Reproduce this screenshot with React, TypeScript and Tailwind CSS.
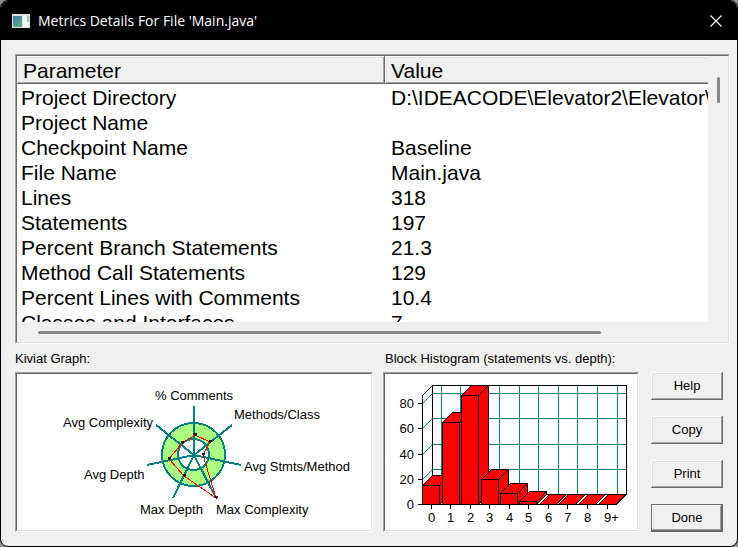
import type { ReactNode } from "react";

const rows: [string, string][] = [
  ["Project Directory", "D:\\IDEACODE\\Elevator2\\Elevator\\"],
  ["Project Name", ""],
  ["Checkpoint Name", "Baseline"],
  ["File Name", "Main.java"],
  ["Lines", "318"],
  ["Statements", "197"],
  ["Percent Branch Statements", "21.3"],
  ["Method Call Statements", "129"],
  ["Percent Lines with Comments", "10.4"],
  ["Classes and Interfaces", "7"],
];

const bevelOut =
  "shadow-[inset_-1px_-1px_#696969,inset_1px_1px_#ffffff,inset_-2px_-2px_#a0a0a0,inset_2px_2px_#e3e3e3]";
const bevelOpenRight =
  "shadow-[inset_0_-1px_#696969,inset_1px_1px_#ffffff,inset_0_-2px_#a0a0a0,inset_2px_2px_#e3e3e3]";

function Sunken({ className = "", children }: { className?: string; children: ReactNode }) {
  return (
    <div className={`border border-t-[#a0a0a0] border-l-[#a0a0a0] border-r-white border-b-white ${className}`}>
      <div className="flex h-full flex-col border border-t-[#696969] border-l-[#696969] border-r-[#e3e3e3] border-b-[#e3e3e3]">
        {children}
      </div>
    </div>
  );
}

function TitleBar() {
  return (
    <header className="flex h-[39px] shrink-0 items-center bg-black px-[11px] text-white">
      <svg width="18" height="14" viewBox="0 0 18 14" aria-hidden="true">
        <defs>
          <linearGradient id="pane" x1="0" y1="0" x2="1" y2="1">
            <stop offset="0" stopColor="#3f78a8" />
            <stop offset="1" stopColor="#5fb07c" />
          </linearGradient>
        </defs>
        <rect width="18" height="14" fill="#dfe3e6" />
        <rect x="1" y="2" width="9" height="11" fill="url(#pane)" />
        <rect x="11" y="2" width="6" height="11" fill="#f6f8f8" />
        <rect x="15" y="2" width="2" height="6" fill="#8fc7ac" />
      </svg>
      <h1 className="ml-2 flex-1 font-['Open_Sans','Noto_Sans',sans-serif] text-[14px] leading-5">
        Metrics Details For File 'Main.java'
      </h1>
      <button type="button" aria-label="Close" className="flex size-5 items-center justify-center">
        <svg width="12" height="12" viewBox="0 0 12 12" fill="none" stroke="white" strokeWidth="1.2" aria-hidden="true">
          <path d="M0.5 0.5L11.5 11.5M11.5 0.5L0.5 11.5" />
        </svg>
      </button>
    </header>
  );
}

function MetricsList() {
  return (
    <Sunken className="min-h-0 flex-1">
      <div className="grid min-h-0 flex-1 grid-cols-[1fr_20px] grid-rows-[minmax(0,1fr)_20px]">
        <div className="overflow-hidden bg-white">
          <table className="w-full table-fixed border-collapse text-left text-[21px] leading-[25px]">
            <thead>
              <tr className="h-7 bg-[#f0f0f0]">
                <th className={`w-[368px] p-0 pl-1.5 font-normal ${bevelOut}`}>Parameter</th>
                <th className={`p-0 pl-1.5 font-normal ${bevelOpenRight}`}>Value</th>
              </tr>
            </thead>
            <tbody className="before:block before:h-px">
              {rows.map(([name, value]) => (
                <tr key={name} className="h-[25px]">
                  <td className="overflow-hidden p-0 pl-1 whitespace-nowrap">{name}</td>
                  <td className="overflow-hidden p-0 pl-1.5 whitespace-nowrap">{value}</td>
                </tr>
              ))}
            </tbody>
          </table>
        </div>
        <div className="flex justify-center pt-[21px]">
          <div className="h-[26px] w-[3px] rounded-full bg-[#868686]" />
        </div>
        <div className="flex items-center pl-[21px]">
          <div className="h-[3px] w-[84%] rounded-full bg-[#868686]" />
        </div>
      </div>
    </Sunken>
  );
}

const spokes = [
  [194, 406],
  [232, 425],
  [241, 465],
  [216, 498],
  [173, 498],
  [147, 465],
  [156, 425],
];

const readings = [
  [195, 435],
  [210, 442],
  [203, 455],
  [216, 498],
  [184, 476],
  [169, 459],
  [182, 443],
];

const kiviatLabels: [string, number, number][] = [
  ["% Comments", 155, 400],
  ["Methods/Class", 234, 419],
  ["Avg Stmts/Method", 244, 471],
  ["Max Complexity", 216, 514],
  ["Max Depth", 140, 514],
  ["Avg Depth", 84, 479],
  ["Avg Complexity", 63, 427],
];

function KiviatGraph() {
  return (
    <svg className="h-[156px] w-full bg-white" viewBox="17 374 354 156" role="img" aria-label="Kiviat graph">
      <g shapeRendering="crispEdges">
        <circle cx="193.5" cy="454.5" r="31.5" fill="#aaff80" stroke="#008080" strokeWidth="2" />
        <circle cx="193.5" cy="454.5" r="15.5" fill="white" stroke="#008080" strokeWidth="2" />
        {spokes.map(([x, y]) => (
          <line key={`${x}-${y}`} x1="194" y1="455" x2={x} y2={y} stroke="#008080" strokeWidth="2" />
        ))}
        <polygon points={readings.map((p) => p.join(",")).join(" ")} fill="none" stroke="#ff0000" />
        {readings.map(([x, y]) => (
          <path key={`${x}-${y}`} d={`M${x - 1} ${y - 2}h3v2h-1v1h-1v-1h-1z`} fill="black" />
        ))}
      </g>
      <g fontSize="13" fill="black">
        {kiviatLabels.map(([text, x, y]) => (
          <text key={text} x={x} y={y}>
            {text}
          </text>
        ))}
      </g>
    </svg>
  );
}

const yTicks = [
  { label: "0", y: 504.5 },
  { label: "20", y: 479.5 },
  { label: "40", y: 454.5 },
  { label: "60", y: 428.5 },
  { label: "80", y: 403.5 },
];

const bars = [
  { label: "0", x: 422.5, tick: 431.5, top: 485.5 },
  { label: "1", x: 442.5, tick: 450.5, top: 422.5 },
  { label: "2", x: 461.5, tick: 470.5, top: 395.5 },
  { label: "3", x: 481.5, tick: 489.5, top: 479.5 },
  { label: "4", x: 500.5, tick: 509.5, top: 493.5 },
  { label: "5", x: 519.5, tick: 528.5, top: 501.5 },
  { label: "6", x: 539.5, tick: 548.5, top: 504.5 },
  { label: "7", x: 558.5, tick: 567.5, top: 504.5 },
  { label: "8", x: 578.5, tick: 587.5, top: 504.5 },
  { label: "9+", x: 598.5, tick: 607.5, top: 504.5 },
];

function BlockHistogram() {
  return (
    <svg className="h-[156px] w-full bg-white" viewBox="385 374 252 156" role="img" aria-label="Block histogram">
      <g shapeRendering="crispEdges" fill="none">
        <g stroke="#008080">
          {yTicks.slice(1).map(({ y }) => (
            <path key={y} d={`M422.5 ${y}l10 -10H626.5`} />
          ))}
          {bars.map(({ tick }) => (
            <path key={tick} d={`M${tick + 10} 385.5V494.5`} />
          ))}
        </g>
        <path d="M422.5 504.5V395.5L432.5 385.5H626.5V494.5L616.5 504.5H422.5M432.5 385.5V494.5H626.5" stroke="black" />
        {yTicks.map(({ y }) => (
          <path key={y} d={`M418 ${y}H422`} stroke="black" />
        ))}
        {bars.map(({ x, tick, top }) => (
          <g key={x} stroke="black" fill="#ff0000">
            <path d={`M${x + 17} ${top}l10 -10V494.5L${x + 17} 504.5z`} />
            <path d={`M${x} ${top}l10 -10h17l-10 10z`} />
            <path d={`M${x} ${top}h17V504.5h-17z`} />
            <path d={`M${tick} 504V509`} />
          </g>
        ))}
      </g>
      <g fontSize="13" fill="black">
        {yTicks.map(({ label, y }) => (
          <text key={label} x="414" y={y + 4.5} textAnchor="end">
            {label}
          </text>
        ))}
        {bars.map(({ label, tick }) => (
          <text key={label} x={tick - 3.5} y="522">
            {label}
          </text>
        ))}
      </g>
    </svg>
  );
}

export default function App() {
  return (
    <div className="h-screen bg-[#8c8c8c] font-['Liberation_Sans',Arial,sans-serif] text-black">
      <main className="flex h-full flex-col overflow-hidden rounded-lg border border-black bg-[#f0f0f0]">
        <TitleBar />
        <div className="flex min-h-0 flex-1 flex-col pt-[14px] pr-[7px] pb-[14px] pl-[14px]">
          <MetricsList />
          <div className="grid grid-cols-[358fr_256fr_74px] gap-x-[10px] pt-[7px] pr-[7px] text-[13px] leading-4">
            <h2>Kiviat Graph:</h2>
            <h2 className="col-span-2 pl-0.5">Block Histogram (statements vs. depth):</h2>
            <Sunken className="mt-[5px]">
              <KiviatGraph />
            </Sunken>
            <Sunken className="mt-[5px]">
              <BlockHistogram />
            </Sunken>
            <div className="mt-[5px] flex flex-col gap-4 pl-0.5">
              {["Help", "Copy", "Print"].map((name) => (
                <button key={name} type="button" className={`h-7 bg-[#f0f0f0] ${bevelOut}`}>
                  {name}
                </button>
              ))}
              <button type="button" className={`h-7 border border-[#696969] bg-[#f0f0f0] ${bevelOut}`}>
                Done
              </button>
            </div>
          </div>
        </div>
      </main>
    </div>
  );
}
